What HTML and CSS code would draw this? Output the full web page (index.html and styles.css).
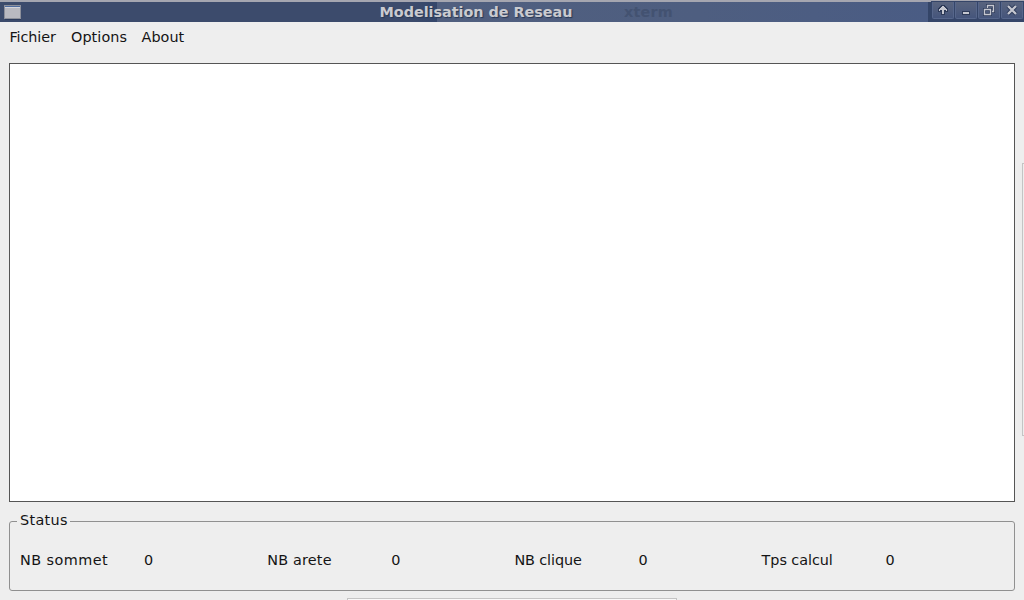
FILE: index.html
```html
<!DOCTYPE html>
<html lang="fr"><head><meta charset="utf-8"><title>Modelisation de Reseau</title><link rel="stylesheet" href="styles.css"></head>
<body>
<div class="window">
<header class="titlebar">
<svg class="app-icon" width="18" height="15" viewBox="0 0 18 15"><rect x=".5" y=".5" width="16" height="13" fill="#b9b9c1" stroke="#8d909b"/><path d="M1 1.500h15" stroke="#4d6b9f"/><path d="M1 2.500h15" stroke="#d5d5db"/><path d="M1 14.500h16" stroke="#2c3b5c"/></svg>
<h1 class="title">Modelisation de Reseau</h1>
<span class="ghost">xterm</span>
<div class="controls">
<button class="control" aria-label="Shade"><svg width="13" height="13" viewBox="0 0 13 13"><path class="outline" d="M5 2h2v1h1v1h1v1h1v2H7v3H5V7H2V5h1V4h1V3h1z"/><path class="fill" d="M5 2h2v1h1v1h1v1h1v2H9V6H7v4H5V6H3v1H2V5h1V4h1V3h1z"/></svg></button>
<button class="control" aria-label="Minimize"><svg width="13" height="13" viewBox="0 0 13 13"><path class="outline" d="M3 8h6v2H3z"/><path class="fill" d="M3 8h6v2H3z"/></svg></button>
<button class="control" aria-label="Restore"><svg width="13" height="13" viewBox="0 0 13 13"><path class="shadow" d="M4.500 4V1.500h6v6H9M1.500 5.500h6v5h-6z"/><path class="line" d="M4.500 4V1.500h6v6H9M1.500 5.500h6v5h-6zM1 5.500h7"/></svg></button>
<button class="control" aria-label="Close"><svg width="13" height="13" viewBox="0 0 13 13"><path class="cross-shadow" d="M2 2l8 8M10 2l-8 8"/><path class="cross" d="M2 2l8 8M10 2l-8 8"/></svg></button>
</div>
</header>
<nav class="menu"><span class="file">Fichier</span><span class="options">Options</span><span class="about">About</span></nav>
<main class="canvas"></main>
<section class="status"><h2 class="legend">Status</h2>
<div class="cell"><span class="label sommet">NB sommet</span><span>0</span></div>
<div class="cell"><span class="label arete">NB arete</span><span>0</span></div>
<div class="cell"><span class="label clique">NB clique</span><span>0</span></div>
<div class="cell"><span class="label calcul">Tps calcul</span><span>0</span></div>
</section>
<i class="edge-right"></i><i class="edge-bottom"></i>
</div>
</body></html>
```
FILE: styles.css
```css
*{box-sizing:border-box}
body{margin:0;font:14.4px/20px "DejaVu Sans",sans-serif;color:#141414}
.window{position:relative;width:1024px;height:600px;background:#eee;overflow:hidden;display:flex;flex-direction:column}
.titlebar{position:relative;height:22px;flex:none;border-top:2px solid #a5a6b0;background:linear-gradient(90deg,#3c4b6c 0 410px,#34466b 437px,#505f7f 437px,#4e5e80 700px,#4a5c84 928px,#344568 928px);display:flex;justify-content:space-between;align-items:flex-start;padding-left:4px}
.app-icon{margin-top:3px}
.title{position:absolute;left:379.5px;top:0;margin:0;font-size:14.4px;font-weight:700;letter-spacing:-.03px;white-space:nowrap;color:#cacbd0;text-shadow:1px 1px 1px #283854}
.ghost{position:absolute;left:624px;top:0;font-weight:700;letter-spacing:.2px;color:#435271}
.controls{display:flex;gap:1px;margin-right:1px}
.control{display:flex;justify-content:center;width:22px;height:17px;padding:2px 0 0;border:1px solid #56668b;border-top:0;border-radius:0 0 2px 2px;background:linear-gradient(#59647e,#45557c);box-shadow:0 0 0 1px #354568}
.control svg{flex:none;overflow:visible}
.outline{fill:#2d3a58;stroke:#2d3a58;stroke-width:2}
.fill{fill:#c5c7d0}
.shadow{fill:none;stroke:#2d3a58;stroke-width:3}
.line{fill:none;stroke:#c5c7d0;stroke-width:1.4}
.cross-shadow{stroke:#2d3a58;stroke-width:4}
.cross{stroke:#c5c7d0;stroke-width:2.3}
.menu{display:flex;gap:15px;height:41px;padding:5px 9.5px;flex:none}
.file{width:46.500px;letter-spacing:-.12px;white-space:nowrap}
.options{width:55.500px;letter-spacing:.08px;white-space:nowrap}
.about{letter-spacing:.05px}
.canvas{height:439px;margin:0 9px;border:1px solid #555;background:#fff;flex:none}
.status{position:relative;height:70px;margin:19px 9px 0;border:1px solid #909090;border-radius:3px;display:grid;grid-template-columns:repeat(4,247.2px);padding:28px 10px}
.legend{position:absolute;left:7px;top:-12px;margin:0;padding:0 2px 0 3px;background:#eee;font:inherit;letter-spacing:.33px}
.cell{display:flex}
.label{width:124px}
.sommet{letter-spacing:.45px}
.arete{letter-spacing:.2px}
.clique{letter-spacing:-.1px}
.calcul{letter-spacing:-.05px}
.edge-right{position:absolute;right:0;top:163px;width:2px;height:273px;border:1px solid #c4c4c4;border-right:0;background:#eee;box-shadow:0 0 6px #0000000c}
.edge-bottom{position:absolute;left:347px;top:598px;width:330px;height:2px;border:1px solid #c4c4c4;border-bottom:0;background:#f8f8f8;box-shadow:0 0 14px #00000010}
```
